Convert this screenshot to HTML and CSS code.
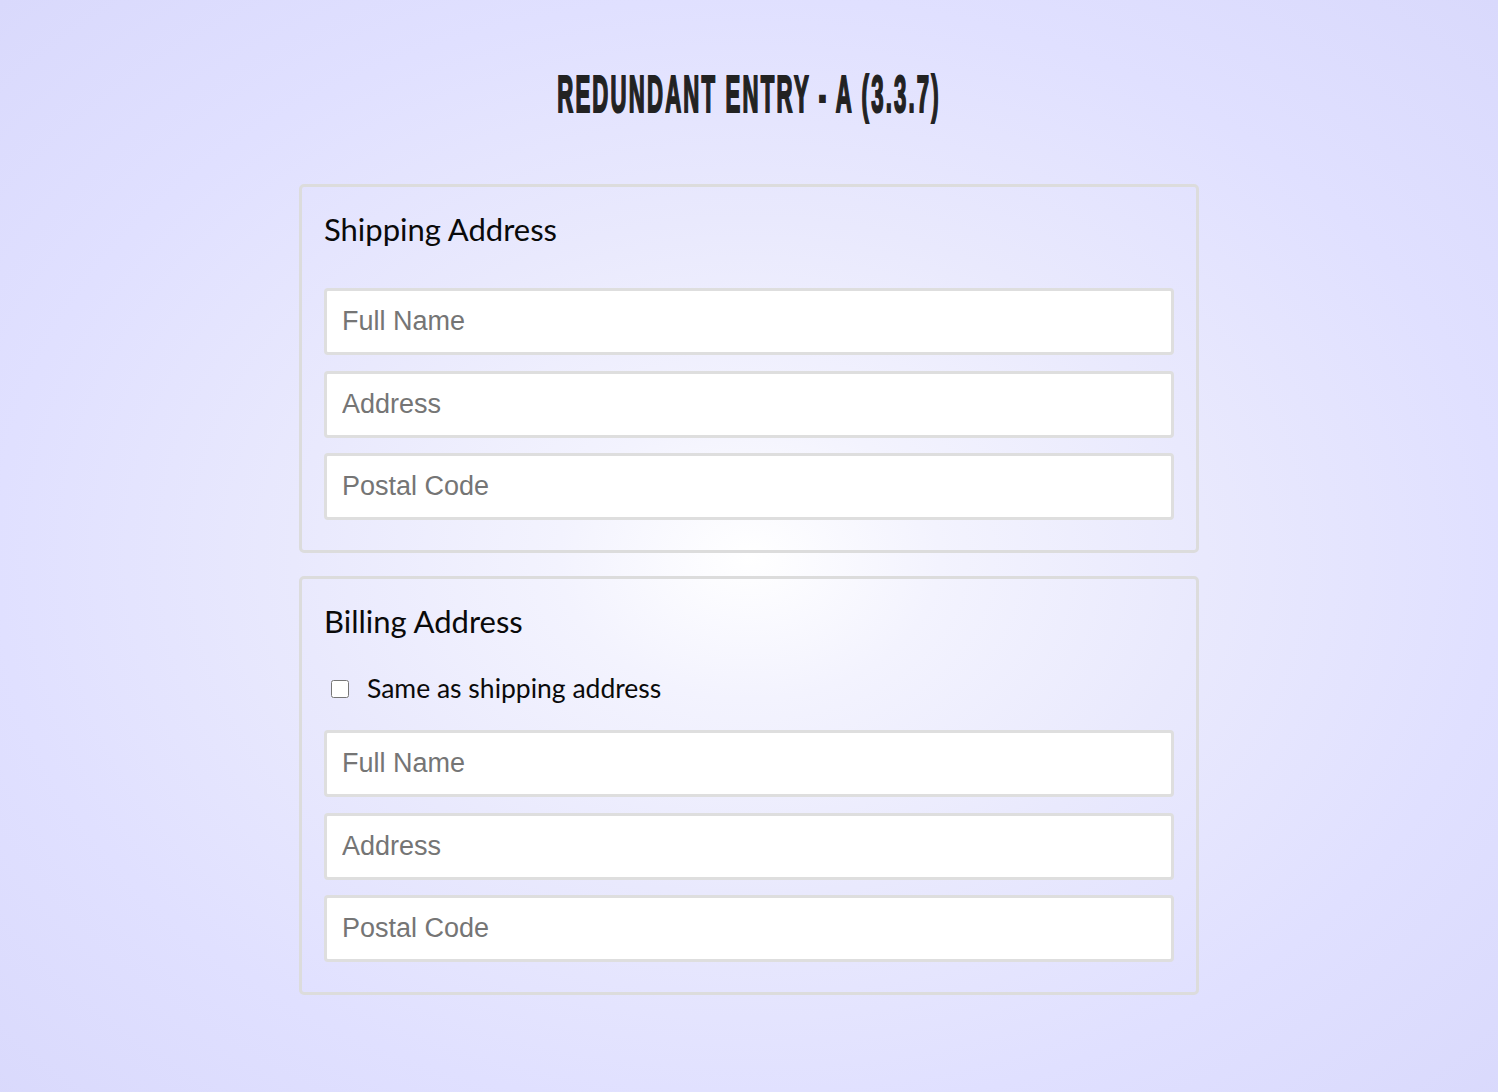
FILE: index.html
```html
<!DOCTYPE html>
<html lang="en">
<head>
<meta charset="utf-8">
<title>Redundant Entry - A (3.3.7)</title>
<link rel="stylesheet" href="styles.css">
</head>
<body>
<main class="page">
  <h1 class="title"><span class="title-text">REDUNDANT ENTRY - A (3.3.7)</span></h1>
  <form class="forms">
    <fieldset class="card">
      <h2 class="card-title">Shipping Address</h2>
      <div class="fields">
        <input class="field" type="text" placeholder="Full Name">
        <input class="field" type="text" placeholder="Address">
        <input class="field" type="text" placeholder="Postal Code">
      </div>
    </fieldset>
    <fieldset class="card">
      <h2 class="card-title">Billing Address</h2>
      <label class="same-row"><input class="check" type="checkbox"><span>Same as shipping address</span></label>
      <div class="fields fields-billing">
        <input class="field" type="text" placeholder="Full Name">
        <input class="field" type="text" placeholder="Address">
        <input class="field" type="text" placeholder="Postal Code">
      </div>
    </fieldset>
  </form>
</main>
</body>
</html>
```
FILE: styles.css
```css
html, body {
  margin: 0;
  padding: 0;
}
body {
  min-height: 100vh;
  background: radial-gradient(ellipse at 50% 51%, #ffffff 0%, #f3f3fe 18%, #e9e9fd 43%, #e0e0ff 71%, #d9d9fc 100%);
  font-family: "Lato", "Liberation Sans", sans-serif;
  color: #111;
}
.page {
  width: 900px;
  margin: 0 auto;
  padding-top: 65px;
  padding-bottom: 60px;
}
.title {
  margin: 0;
  text-align: center;
  line-height: 60px;
  height: 60px;
  font-family: "Liberation Sans", Arial, sans-serif;
  font-weight: 700;
  font-size: 51px;
  letter-spacing: 5px;
  color: #222;
  white-space: nowrap;
}
.title-text {
  display: inline-block;
  transform: scaleX(0.435);
  transform-origin: 50% 50%;
  -webkit-text-stroke: 2.2px #222;
}
.forms {
  margin-top: 59px;
  display: flex;
  flex-direction: column;
  gap: 23px;
}
.card {
  margin: 0;
  min-width: 0;
  border: 3px solid #dcdcdc;
  border-radius: 5px;
  padding: 24px 22px 30px;
}
.card-title {
  margin: 0;
  font-family: "Lato", sans-serif;
  font-weight: 400;
  font-size: 31px;
  line-height: 36px;
  color: #0a0a0a;
}
.fields {
  margin-top: 41px;
  display: flex;
  flex-direction: column;
  gap: 15.5px;
}
.fields-billing {
  margin-top: 27px;
}
.field {
  box-sizing: border-box;
  width: 100%;
  height: 67px;
  margin: 0;
  border: 3px solid #dedede;
  border-radius: 4px;
  background: #fff;
  padding: 0 15px;
  font-family: "Liberation Sans", Arial, sans-serif;
  font-size: 27px;
  color: #222;
  outline: none;
}
.field::placeholder {
  color: #757575;
}
.same-row {
  margin-top: 34px;
  display: flex;
  align-items: center;
  height: 30px;
  font-family: "Lato", sans-serif;
  font-size: 26.5px;
  line-height: 30px;
  color: #0a0a0a;
}
.check {
  width: 18px;
  height: 18px;
  margin: 2px 18px 0 7px;
}
```
